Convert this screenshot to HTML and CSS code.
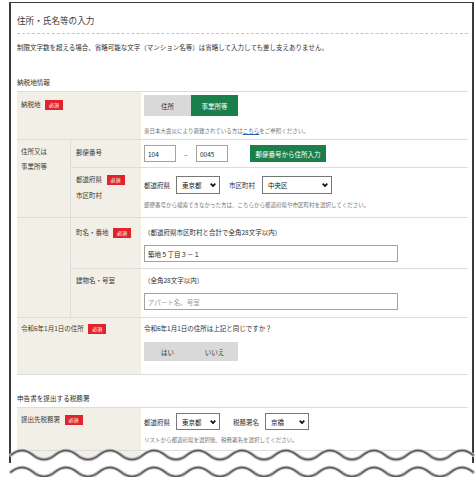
FILE: index.html
```html
<!DOCTYPE html>
<html lang="ja">
<head>
<meta charset="utf-8">
<title>住所・氏名等の入力</title>
<link rel="stylesheet" href="styles.css">
</head>
<body>
<div class="page">
  <div class="frame">
    <h1 class="title">住所・氏名等の入力</h1>
    <p class="lead">制限文字数を超える場合、省略可能な文字（マンション名等）は省略して入力しても差し支えありません。</p>

    <h2 class="sec">納税地情報</h2>
    <div class="form form1">
      <div class="lab span2 p7">納税地<span class="req">必須</span></div>
      <div class="cell pt3">
        <div class="toggle">
          <button type="button" class="tbtn">住所</button><button type="button" class="tbtn on">事業所等</button>
        </div>
        <p class="note mt11">東日本大震災により避難されている方は<a class="link">こちら</a>をご参照ください。</p>
      </div>

      <div class="lab outer">住所又は<br>事業所等</div>
      <div class="lab sub p7">郵便番号</div>
      <div class="cell pt5">
        <div class="line">
          <input class="txt zip" type="text" value="104">
          <span class="dash">–</span>
          <input class="txt zip" type="text" value="0045">
          <button type="button" class="gbtn">郵便番号から住所入力</button>
        </div>
      </div>

      <div class="lab sub two">都道府県<span class="req">必須</span><br>市区町村</div>
      <div class="cell pt8">
        <div class="line">
          <span class="fl">都道府県</span>
          <label class="sel w44"><select><option>東京都</option></select><svg class="chev" viewBox="0 0 6 4" width="6" height="4"><path d="M0.7 0.7 L3 3.1 L5.3 0.7" fill="none" stroke="#111" stroke-width="1.7"/></svg></label>
          <span class="fl ml9">市区町村</span>
          <label class="sel w70"><select><option>中央区</option></select><svg class="chev" viewBox="0 0 6 4" width="6" height="4"><path d="M0.7 0.7 L3 3.1 L5.3 0.7" fill="none" stroke="#111" stroke-width="1.7"/></svg></label>
        </div>
        <p class="note mt7">郵便番号から検索できなかった方は、こちらから都道府県や市区町村を選択してください。</p>
      </div>

      <div class="lab outer"></div>
      <div class="lab sub p9">町名・番地<span class="req">必須</span></div>
      <div class="cell pt9">
        <p class="txtline">（都道府県市区町村と合計で全角28文字以内）</p>
        <input class="txt wide mt8" type="text" value="築地５丁目３－１">
      </div>

      <div class="lab sub p6">建物名・号室</div>
      <div class="cell pt6">
        <p class="txtline">（全角28文字以内）</p>
        <input class="txt wide mt8" type="text" placeholder="アパート名、号室">
      </div>

      <div class="lab span2 p5">令和6年1月1日の住所<span class="req">必須</span></div>
      <div class="cell pt5">
        <p class="txtline">令和6年1月1日の住所は上記と同じですか？</p>
        <div class="toggle small mt9">
          <button type="button" class="tbtn">はい</button><button type="button" class="tbtn">いいえ</button>
        </div>
      </div>
    </div>

    <h2 class="sec sec2">申告書を提出する税務署</h2>
    <div class="form form2">
      <div class="lab span2 p6">提出先税務署<span class="req">必須</span></div>
      <div class="cell pt5">
        <div class="line">
          <span class="fl">都道府県</span>
          <label class="sel w44 h17"><select><option>東京都</option></select><svg class="chev" viewBox="0 0 6 4" width="6" height="4"><path d="M0.7 0.7 L3 3.1 L5.3 0.7" fill="none" stroke="#111" stroke-width="1.7"/></svg></label>
          <span class="fl ml13">税務署名</span>
          <label class="sel w44 h17"><select><option>京橋</option></select><svg class="chev" viewBox="0 0 6 4" width="6" height="4"><path d="M0.7 0.7 L3 3.1 L5.3 0.7" fill="none" stroke="#111" stroke-width="1.7"/></svg></label>
        </div>
        <p class="note mt6">リストから都道府県を選択後、税務署名を選択してください。</p>
      </div>
      <div class="lab span2"></div>
      <div class="cell"></div>
    </div>
  </div>

  <svg class="tear" width="476" height="32" viewBox="0 0 476 32" aria-hidden="true">
    <defs>
      <clipPath id="inner"><rect x="11" y="0" width="461" height="32"/></clipPath>
    </defs>
    <path clip-path="url(#inner)" fill="#fff" d="M11,10 q11,-9 22,0 t22,0 t22,0 t22,0 t22,0 t22,0 t22,0 t22,0 t22,0 t22,0 t22,0 t22,0 t22,0 t22,0 t22,0 t22,0 t22,0 t22,0 t22,0 t22,0 t22,0 t22,0 L476,32 L0,32 Z"/>
    <g fill="none" stroke-linecap="round">
      <path stroke="#bdbdbd" stroke-width="3.6" d="M11,10 q11,-9 22,0 t22,0 t22,0 t22,0 t22,0 t22,0 t22,0 t22,0 t22,0 t22,0 t22,0 t22,0 t22,0 t22,0 t22,0 t22,0 t22,0 t22,0 t22,0 t22,0 t22,0"/>
      <path stroke="#555" stroke-width="1.6" d="M11,10 q11,-9 22,0 t22,0 t22,0 t22,0 t22,0 t22,0 t22,0 t22,0 t22,0 t22,0 t22,0 t22,0 t22,0 t22,0 t22,0 t22,0 t22,0 t22,0 t22,0 t22,0 t22,0"/>
      <path stroke="#bdbdbd" stroke-width="3.6" d="M11,27 q11,-9 22,0 t22,0 t22,0 t22,0 t22,0 t22,0 t22,0 t22,0 t22,0 t22,0 t22,0 t22,0 t22,0 t22,0 t22,0 t22,0 t22,0 t22,0 t22,0 t22,0 t22,0"/>
      <path stroke="#555" stroke-width="1.6" d="M11,27 q11,-9 22,0 t22,0 t22,0 t22,0 t22,0 t22,0 t22,0 t22,0 t22,0 t22,0 t22,0 t22,0 t22,0 t22,0 t22,0 t22,0 t22,0 t22,0 t22,0 t22,0 t22,0"/>
    </g>
  </svg>
</div>
</body>
</html>
```

FILE: styles.css
```css
* { box-sizing: border-box; }
html, body { margin: 0; padding: 0; background: #fff; }
body {
  font-family: "Noto Sans CJK JP", "Noto Sans", sans-serif;
  color: #2e2e2e;
}
p { margin: 0; }

.page {
  position: relative;
  width: 476px;
  height: 477px;
  overflow: hidden;
  padding-top: 2px;
}

.frame {
  margin-left: 9px;
  width: 465px;
  height: 461px;
  border-style: solid;
  border-color: #3c3c3c;
  border-width: 1px 2px 0 2px;
  overflow: hidden;
  padding: 0 4px 0 6px;
  background: #fff;
}

.title {
  margin: 0;
  padding: 11px 0 7px;
  font-size: 8.6px;
  line-height: 12px;
  font-weight: normal;
  color: #3a3a3a;
  border-bottom: 1px dashed #f0bf73;
}

.lead {
  margin-top: 8px;
  font-size: 6.5px;
  line-height: 10px;
  color: #2e2e2e;
}

.sec {
  margin: 25px 0 4px;
  font-size: 6.6px;
  line-height: 10px;
  font-weight: normal;
  color: #2e2e2e;
}
.sec2 { margin-top: 18px; }

.form {
  display: grid;
  grid-template-columns: 54px 70px 1fr;
  border-top: 1px solid #dcdcdc;
}
.form1 { grid-template-rows: 48px 28px 50px 51px 49px 57px; }
.form2 { grid-template-rows: 43px 40px; }

.lab {
  background: #f2efe6;
  border-bottom: 1px solid #dcdcdc;
  padding-left: 4px;
  font-size: 6.5px;
  line-height: 10px;
  color: #3a3a3a;
  white-space: nowrap;
}
.span2 { grid-column: span 2; }
.outer {
  grid-row: span 2;
  border-right: 1px solid #dcdcdc;
  line-height: 15px;
  padding-top: 4px;
}
.sub { padding-left: 5px; }
.sub.two { line-height: 16px; padding-top: 3px; }

.p5 { padding-top: 5px; }
.p6 { padding-top: 6px; }
.p7 { padding-top: 7px; }
.p9 { padding-top: 9px; }

.req {
  display: inline-block;
  height: 10px;
  line-height: 10px;
  padding: 0 4px;
  margin-left: 4.5px;
  background: #e2232b;
  color: #fff;
  font-size: 5px;
  vertical-align: middle;
  position: relative;
  top: -0.5px;
}

.cell {
  border-bottom: 1px solid #dcdcdc;
  padding-left: 3px;
  background: #fff;
}
.pt3 { padding-top: 3px; }
.pt5 { padding-top: 5px; }
.pt6 { padding-top: 6px; }
.pt8 { padding-top: 8px; }
.pt9 { padding-top: 9px; }

.mt6 { margin-top: 6px; }
.mt7 { margin-top: 7px; }
.mt8 { margin-top: 8px; }
.mt9 { margin-top: 9px; }
.mt11 { margin-top: 11px; }

.toggle { display: flex; }
.tbtn {
  width: 47px;
  height: 21px;
  margin: 0;
  padding: 0;
  border: 0;
  background: #d9d9d9;
  color: #333;
  font-family: inherit;
  font-size: 6.5px;
  line-height: 10px;
}
.tbtn.on { background: #1b7f4b; color: #fff; }
.toggle.small .tbtn { height: 19px; }

.note {
  font-size: 5.5px;
  line-height: 8px;
  color: #747474;
  white-space: nowrap;
}
.link {
  color: #2a5db0;
  text-decoration: underline;
}

.txtline {
  font-size: 6.5px;
  line-height: 10px;
  color: #2e2e2e;
  white-space: nowrap;
}

.line {
  display: flex;
  align-items: center;
}
.fl {
  font-size: 6.5px;
  line-height: 10px;
  color: #2e2e2e;
  white-space: nowrap;
  margin-right: 6px;
}
.ml9 { margin-left: 9px; margin-right: 7px; }
.ml13 { margin-left: 13px; }

.txt {
  display: block;
  height: 17px;
  margin-left: 0;
  margin-right: 0;
  padding: 0 3px;
  border: 1px solid #a2a2a2;
  background: #fff;
  color: #1e1e1e;
  font-family: inherit;
  font-size: 6.5px;
  outline: none;
}
.txt::placeholder { color: #9a9a9a; }
.zip { width: 32px; }
.wide { width: 254px; }
.dash {
  width: 20px;
  text-align: center;
  font-size: 6.5px;
  color: #333;
}

.gbtn {
  margin: 0 0 0 22px;
  width: 76px;
  height: 17px;
  padding: 0;
  border: 0;
  background: #1b7f4b;
  color: #fff;
  font-family: inherit;
  font-size: 6.5px;
  white-space: nowrap;
}

.sel {
  display: flex;
  align-items: center;
  height: 18px;
  padding: 0 3px 0 5px;
  border: 1px solid #777;
  background: #fff;
}
.sel.h17 { height: 17px; }
.w44 { width: 44px; }
.w70 { width: 70px; }
.sel select {
  appearance: none;
  -webkit-appearance: none;
  flex: 1;
  min-width: 0;
  margin: 0;
  padding: 0;
  border: 0;
  background: transparent;
  color: #111;
  font-family: inherit;
  font-size: 6.5px;
  line-height: 10px;
  outline: none;
}
.chev { flex: none; display: block; }

.tear {
  position: absolute;
  left: 0;
  top: 445px;
}
```
